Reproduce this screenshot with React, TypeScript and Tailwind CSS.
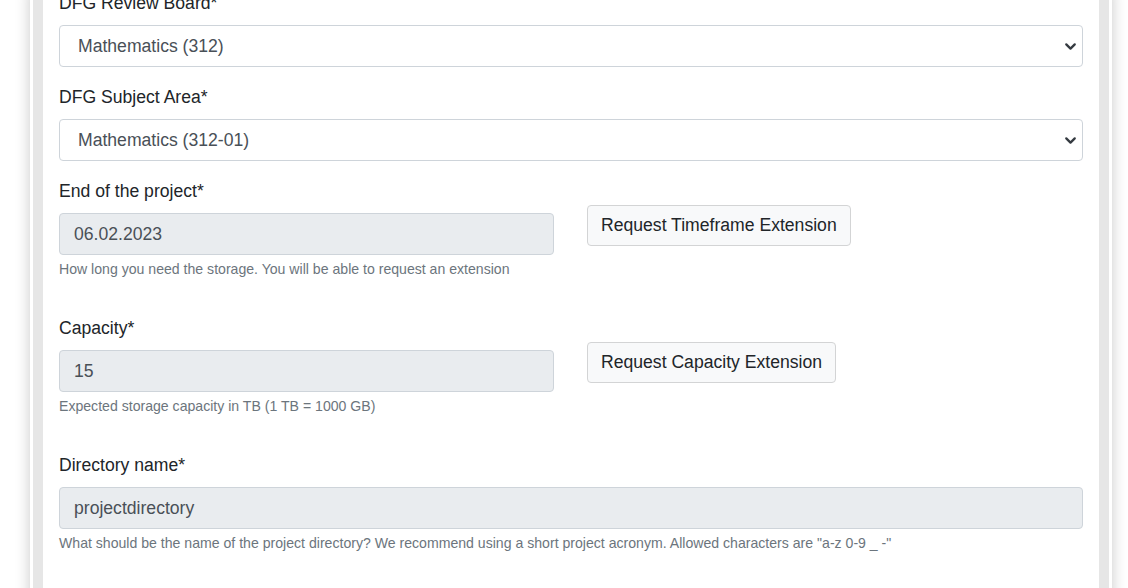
import { ChevronDown } from 'lucide-react'

function FakeSelect({ value }: { value: string }) {
  return (
    <div className="flex h-[42px] items-center justify-between rounded-[4px] border border-[#ced4da] bg-white pl-[18px] pr-[3px] text-[17.6px] text-[#495057]">
      <span>{value}</span>
      <ChevronDown className="h-[17px] w-[17px] text-[#343a40]" strokeWidth={3.2} />
    </div>
  )
}

function ReadonlyInput({ value }: { value: string }) {
  return (
    <div className="flex h-[42px] items-center rounded-[4px] border border-[#ced4da] bg-[#e9ecef] px-[14px] text-[17.6px] text-[#495057]">
      {value}
    </div>
  )
}

function Label({ children }: { children: React.ReactNode }) {
  return <div className="mb-[10px] h-[26px] text-[17.6px] leading-[28px] text-[#212529]">{children}</div>
}

function Help({ children }: { children: React.ReactNode }) {
  return <div className="mt-[4px] text-[14.1px] leading-[21px] text-[#6c757d]">{children}</div>
}

function ExtButton({ children }: { children: React.ReactNode }) {
  return (
    <button className="mt-[28px] h-[41px] rounded-[4px] border border-[#d3d4d5] bg-[#f8f9fa] px-[13px] text-[17.6px] text-[#212529]">
      {children}
    </button>
  )
}

export default function App() {
  return (
    <div className="h-[588px] overflow-hidden bg-white font-['Liberation_Sans',Arial,sans-serif]">
      <div className="ml-[30px] h-[620px] w-[1082px] border-x-[3px] border-white bg-[#e6e6e6] px-[10px] shadow-[0_0_14px_rgba(0,0,0,0.22)]">
        <div className="h-full bg-white px-[16px]">
          <div className="mt-[-11px]">
            {/* Review board */}
            <Label>DFG Review Board*</Label>
            <FakeSelect value="Mathematics (312)" />

            <div className="mt-[16px]">
              <Label>DFG Subject Area*</Label>
              <FakeSelect value="Mathematics (312-01)" />
            </div>

            {/* End of project */}
            <div className="mt-[16px] grid grid-cols-[495px_1fr] gap-x-[33px]">
              <div>
                <Label>End of the project*</Label>
                <ReadonlyInput value="06.02.2023" />
                <Help>How long you need the storage. You will be able to request an extension</Help>
              </div>
              <div>
                <ExtButton>Request Timeframe Extension</ExtButton>
              </div>
            </div>

            {/* Capacity */}
            <div className="mt-[34px] grid grid-cols-[495px_1fr] gap-x-[33px]">
              <div>
                <Label>Capacity*</Label>
                <ReadonlyInput value="15" />
                <Help>Expected storage capacity in TB (1 TB = 1000 GB)</Help>
              </div>
              <div>
                <ExtButton>Request Capacity Extension</ExtButton>
              </div>
            </div>

            {/* Directory */}
            <div className="mt-[34px]">
              <Label>Directory name*</Label>
              <ReadonlyInput value="projectdirectory" />
              <Help>
                What should be the name of the project directory? We recommend using a short project acronym. Allowed characters are "a-z 0-9 _ -"
              </Help>
            </div>
          </div>
        </div>
      </div>
    </div>
  )
}
